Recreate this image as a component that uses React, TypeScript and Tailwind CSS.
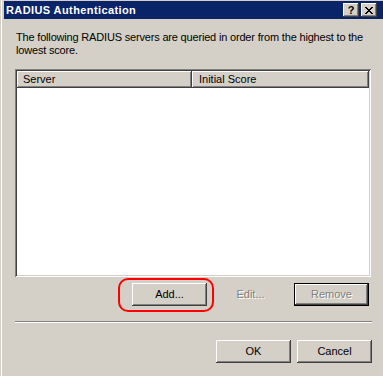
import React from 'react';

const raised =
  'shadow-[inset_-1px_-1px_0_#404040,inset_1px_1px_0_#ffffff,inset_-2px_-2px_0_#808080,inset_2px_2px_0_#d4d0c8]';

function TitleButton({ children }: { children: React.ReactNode }) {
  return (
    <div className={`w-[16px] h-[14px] bg-[#d4d0c8] flex items-center justify-center ${raised}`}>
      {children}
    </div>
  );
}

function WinButton({
  label,
  disabled,
  isDefault,
  flat,
}: {
  label: string;
  disabled?: boolean;
  isDefault?: boolean;
  flat?: boolean;
}) {
  const text = disabled
    ? 'text-[#808080] [text-shadow:1px_1px_0_#ffffff]'
    : 'text-black';

  if (flat) {
    return (
      <div className={`w-[75px] h-[23px] flex items-center justify-center ${text}`}>{label}</div>
    );
  }

  if (isDefault) {
    return (
      <div className="w-[75px] h-[23px] border border-black bg-[#d4d0c8]">
        <div className={`w-full h-full flex items-center justify-center ${text} shadow-[inset_-1px_-1px_0_#404040,inset_1px_1px_0_#ffffff,inset_-2px_-2px_0_#808080]`}>
          {label}
        </div>
      </div>
    );
  }

  return (
    <div className={`w-[75px] h-[23px] bg-[#d4d0c8] flex items-center justify-center ${text} ${raised}`}>
      {label}
    </div>
  );
}

export default function App() {
  return (
    <div
      className="relative w-[383px] h-[376px] bg-[#d4d0c8] flex flex-col overflow-hidden text-[11px] leading-[13px] text-black shadow-[inset_1px_0_0_#d4d0c8,inset_2px_0_0_#ffffff]"
      style={{ fontFamily: '"Liberation Sans", Arial, sans-serif' }}
    >
      {/* TITLE BAR */}
      <div className="mt-[1px] ml-[4px] h-[18px] bg-[#0a246a] flex items-center pl-[2px] pr-[6px]">
        <span className="text-white font-bold text-[11px] tracking-[0.4px] flex-1">RADIUS Authentication</span>
        <div className="flex">
          <TitleButton>
            <span className="font-bold text-[11px] leading-none text-black mt-[1px]">?</span>
          </TitleButton>
          <div className="w-[2px]" />
          <TitleButton>
            <svg width="8" height="7" viewBox="0 0 8 7" shapeRendering="crispEdges">
              <path
                d="M0 0h2v1H0zM6 0h2v1H6zM1 1h2v1H1zM5 1h2v1H5zM2 2h4v1H2zM3 3h2v1H3zM2 4h4v1H2zM1 5h2v1H1zM5 5h2v1H5zM0 6h2v1H0zM6 6h2v1H6z"
                fill="#000"
              />
            </svg>
          </TitleButton>
        </div>
      </div>

      {/* DESCRIPTION */}
      <p className="mt-[12px] pl-[16px] pr-[6px] tracking-[-0.18px]">
        The following RADIUS servers are queried in order from the highest to the lowest score.
      </p>

      {/* LIST VIEW */}
      <div className="mt-[12px] ml-[15px] w-[356px] h-[208px] p-[2px] bg-white shadow-[inset_1px_1px_0_#808080,inset_-1px_-1px_0_#ffffff,inset_2px_2px_0_#404040,inset_-2px_-2px_0_#d4d0c8]">
        <div className="flex h-[17px]">
          <div className={`w-[175px] h-full bg-[#d4d0c8] flex items-center pl-[6px] ${raised}`}>Server</div>
          <div className={`w-[177px] h-full bg-[#d4d0c8] flex items-center pl-[7px] ${raised}`}>Initial Score</div>
        </div>
      </div>

      {/* ACTION BUTTONS */}
      <div className="relative mt-[6px] pl-[132px] flex gap-[6px]">
        <WinButton label="Add..." />
        <WinButton label="Edit..." disabled flat />
        <WinButton label="Remove" disabled isDefault />
        {/* red annotation */}
        <div className="absolute left-[118px] top-[-5px] w-[96px] h-[34px] rounded-[10px] border-2 border-[#ff0000]" />
      </div>

      {/* SEPARATOR */}
      <div className="mt-[15px] ml-[15px] w-[357px] h-[2px] border-t border-t-[#808080] border-b border-b-white" />

      {/* OK / CANCEL */}
      <div className="mt-[17px] pl-[216px] flex gap-[6px]">
        <WinButton label="OK" />
        <WinButton label="Cancel" />
      </div>
    </div>
  );
}
